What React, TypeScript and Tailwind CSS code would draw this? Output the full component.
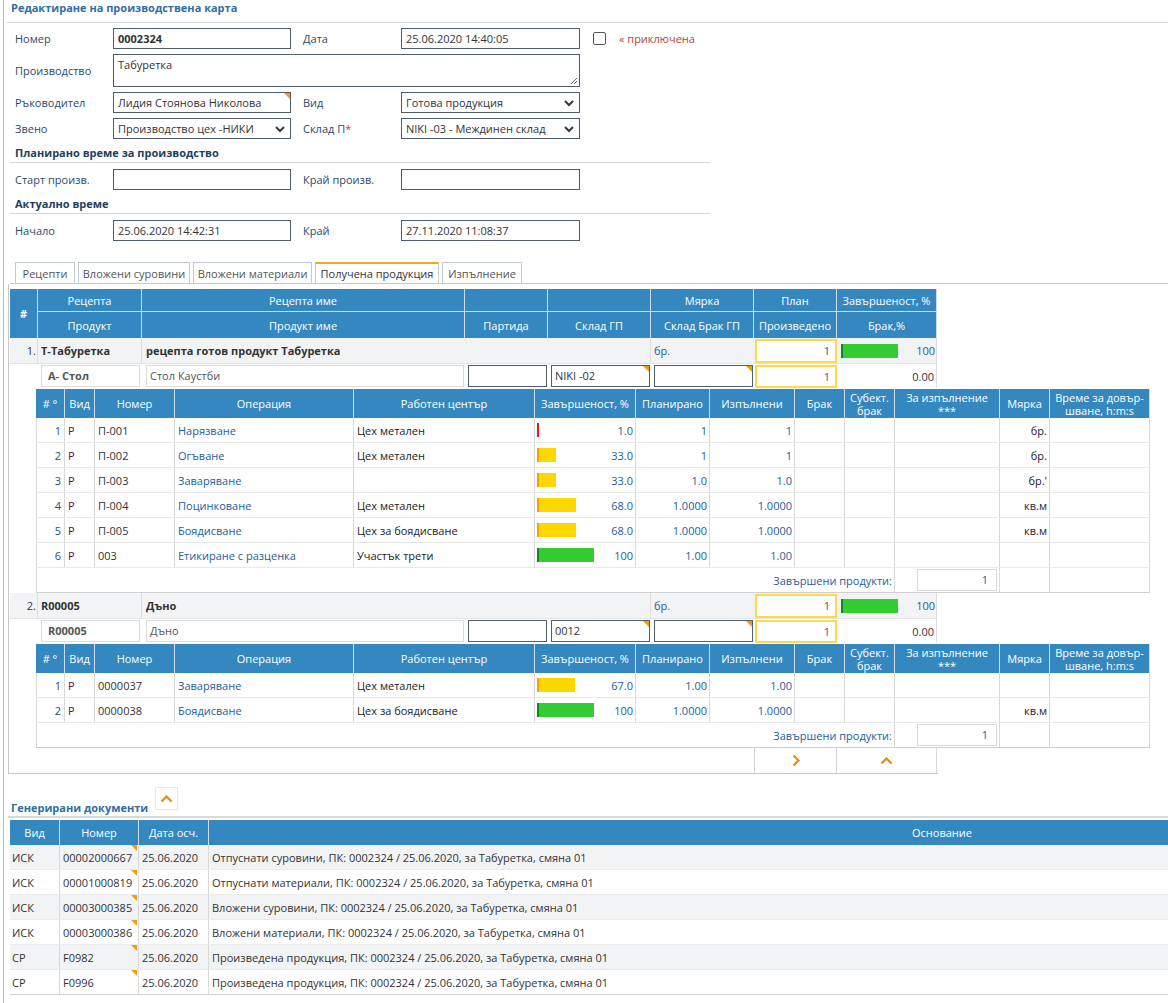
import React from "react";

const LINK = "text-[#23609a]";

function Corner() {
  return (
    <span className="absolute right-0 top-0 h-0 w-0 border-l-[6px] border-t-[6px] border-l-transparent border-t-[#f39c12]" />
  );
}

function SelectArrow() {
  return (
    <svg className="absolute right-[5px] top-[7px]" width="10" height="7" viewBox="0 0 10 7">
      <path d="M1 1l4 4 4-4" fill="none" stroke="#3a3a3a" strokeWidth="2" />
    </svg>
  );
}

function Input({
  w,
  value,
  bold,
  corner,
  select,
}: {
  w: string;
  value?: string;
  bold?: boolean;
  corner?: boolean;
  select?: boolean;
}) {
  return (
    <div
      className={`relative h-[21px] ${w} shrink-0 border border-[#4f5d6b] bg-white pl-[4px] leading-[19px] ${bold ? "font-bold" : ""}`}
    >
      {value}
      {corner && <Corner />}
      {select && <SelectArrow />}
    </div>
  );
}

function Label({ children, red }: { children: React.ReactNode; red?: boolean }) {
  return (
    <div className="w-[98px] shrink-0 text-[#2a4a6b]">
      {children}
      {red && <span className="text-[#e0302a]">*</span>}
    </div>
  );
}

function FormRow({ children, top = "mt-[5px]" }: { children: React.ReactNode; top?: string }) {
  return <div className={`${top} flex h-[21px] items-center pl-[5px]`}>{children}</div>;
}

function Section({ title }: { title: string }) {
  return (
    <div className="mt-[4px] h-[20px] w-[700px] border-b border-[#d5d5d5] pl-[5px] font-bold leading-[19px] text-[#1d3f5e]">
      {title}
    </div>
  );
}

function Bar({ pct }: { pct: number }) {
  if (pct < 5) return <span className="inline-block h-[14px] w-[2px] bg-[#e41b1b]" />;
  const w = Math.round((pct / 100) * 57);
  const done = pct >= 100;
  return (
    <span
      className={`inline-block h-[14px] border-l-2 ${done ? "border-[#12861a] bg-[#33cc33]" : "border-[#f5a000] bg-[#ffd700]"}`}
      style={{ width: w }}
    />
  );
}

function YellowInput({ h }: { h: string }) {
  return (
    <div className={`ml-[1px] ${h} w-[82px] border-2 border-[#ffd84d] bg-white pr-[5px] text-right leading-[19px] text-[#555]`}>
      1
    </div>
  );
}

function Box({
  w,
  children,
  light,
  bold,
  corner,
}: {
  w: string;
  children?: React.ReactNode;
  light?: boolean;
  bold?: boolean;
  corner?: boolean;
}) {
  return (
    <div
      className={`relative h-[22px] ${w} border bg-white leading-[20px] ${light ? "border-[#dcdcdc] text-[#555]" : "border-[#4f5d6b]"} ${bold ? "pl-[6px] font-bold text-[#444]" : "pl-[3px]"}`}
    >
      {children}
      {corner && <Corner />}
    </div>
  );
}

function RecipeRow({ n, code, name }: { n: string; code: string; name: string }) {
  return (
    <div className="flex h-[26px] w-[927px] border-b border-[#e4e4e4] bg-[#f2f3f5]">
      <div className="flex w-[28px] shrink-0 items-center justify-end border-r border-[#dedede] pr-[1px]">{n}</div>
      <div className="flex w-[104px] shrink-0 items-center border-r border-[#dedede] pl-[3px] font-bold">{code}</div>
      <div className="flex w-[323px] shrink-0 items-center pl-[4px] font-bold">{name}</div>
      <div className="w-[83px] shrink-0" />
      <div className="w-[103px] shrink-0 border-r border-[#dedede]" />
      <div className={`flex w-[103px] shrink-0 items-center pl-[3px] ${LINK}`}>бр.</div>
      <div className="flex w-[83px] shrink-0 items-center">
        <YellowInput h="h-[24px]" />
      </div>
      <div className="flex w-[100px] shrink-0 items-center justify-between border-r border-[#dedede] pl-[4px] pr-[1px]">
        <Bar pct={100} />
        <span className={LINK}>100</span>
      </div>
    </div>
  );
}

function ProductRow({ code, name, store }: { code: string; name: string; store: string }) {
  return (
    <div className="flex h-[24px] w-[927px] items-center">
      <div className="w-[28px] shrink-0" />
      <div className="w-[104px] shrink-0 pl-[3px]">
        <Box w="w-[99px]" light bold>
          {code}
        </Box>
      </div>
      <div className="w-[323px] shrink-0 pl-[4px]">
        <Box w="w-[318px]" light>
          {name}
        </Box>
      </div>
      <div className="w-[83px] shrink-0 pl-[3px]">
        <Box w="w-[79px]" />
      </div>
      <div className="w-[103px] shrink-0 pl-[3px]">
        <Box w="w-[99px]" corner>
          {store}
        </Box>
      </div>
      <div className="w-[103px] shrink-0 pl-[3px]">
        <Box w="w-[99px]" corner />
      </div>
      <div className="w-[83px] shrink-0">
        <YellowInput h="h-[23px]" />
      </div>
      <div className="flex h-full w-[100px] shrink-0 items-center justify-end border-r border-[#dedede] pr-[2px]">0.00</div>
    </div>
  );
}

type Op = {
  n: number;
  code: string;
  op: string;
  wc: string;
  pct: number;
  pv: string;
  plan: string;
  done: string;
  unit: string;
};

const SUB_HEAD: [string, string][] = [
  ["w-[29px]", "# °"],
  ["w-[30px]", "Вид"],
  ["w-[80px]", "Номер"],
  ["w-[179px]", "Операция"],
  ["w-[181px]", "Работен център"],
  ["w-[101px]", "Завършеност, %"],
  ["w-[74px]", "Планирано"],
  ["w-[85px]", "Изпълнени"],
  ["w-[50px]", "Брак"],
  ["w-[50px]", "Субект.\nбрак"],
  ["w-[105px]", "За изпълнение\n***"],
  ["w-[50px]", "Мярка"],
  ["w-[100px]", "Време за довър-\nшване, h:m:s"],
];

const CELL = "flex h-full shrink-0 items-center border-r border-[#d9d9d9]";

function SubTable({ ops }: { ops: Op[] }) {
  return (
    <div className="ml-[26px] mt-[1px] w-[1114px]">
      <div className="flex h-[29px] bg-[#3588bf] leading-[13px] text-white">
        {SUB_HEAD.map(([w, t], i) => (
          <div
            key={i}
            className={`${w} flex shrink-0 items-center justify-center whitespace-pre-line border-r border-[#cfdce7] text-center`}
          >
            {t}
          </div>
        ))}
      </div>
      {ops.map((o) => (
        <div key={o.n} className="flex h-[25px] border-b border-[#e9e9e9]">
          <div className={`${CELL} w-[29px] justify-end border-l pr-[3px] text-[#1f4e79]`}>{o.n}</div>
          <div className={`${CELL} w-[30px] pl-[3px] text-[#5c1236]`}>Р</div>
          <div className={`${CELL} w-[80px] pl-[3px]`}>{o.code}</div>
          <div className={`${CELL} w-[179px] pl-[3px] ${LINK}`}>{o.op}</div>
          <div className={`${CELL} w-[181px] pl-[3px] text-[#222]`}>{o.wc}</div>
          <div className={`${CELL} w-[101px] justify-between pl-[2px] pr-[2px]`}>
            <Bar pct={o.pct} />
            <span className={LINK}>{o.pv}</span>
          </div>
          <div className={`${CELL} w-[74px] justify-end pr-[2px] ${LINK}`}>{o.plan}</div>
          <div className={`${CELL} w-[85px] justify-end pr-[2px] ${LINK}`}>{o.done}</div>
          <div className={`${CELL} w-[50px]`} />
          <div className={`${CELL} w-[50px]`} />
          <div className={`${CELL} w-[105px]`} />
          <div className={`${CELL} w-[50px] justify-end pr-[2px] text-[#2a2035]`}>{o.unit}</div>
          <div className={`${CELL} w-[100px]`} />
        </div>
      ))}
      <div className="flex h-[25px] border-b border-[#d0d0d0]">
        <div className={`${CELL} w-[859px] justify-end border-l pr-[2px] ${LINK}`}>Завършени продукти:</div>
        <div className={`${CELL} w-[105px] pl-[22px]`}>
          <div className={`h-[22px] w-[80px] border border-[#d9d9d9] pr-[8px] text-right leading-[20px] ${LINK}`}>1</div>
        </div>
        <div className={`${CELL} w-[50px]`} />
        <div className={`${CELL} w-[100px]`} />
      </div>
    </div>
  );
}

const OPS1: Op[] = [
  { n: 1, code: "П-001", op: "Нарязване", wc: "Цех метален", pct: 1, pv: "1.0", plan: "1", done: "1", unit: "бр." },
  { n: 2, code: "П-002", op: "Огъване", wc: "Цех метален", pct: 33, pv: "33.0", plan: "1", done: "1", unit: "бр." },
  { n: 3, code: "П-003", op: "Заваряване", wc: "", pct: 33, pv: "33.0", plan: "1.0", done: "1.0", unit: "бр.'" },
  { n: 4, code: "П-004", op: "Поцинковане", wc: "Цех метален", pct: 68, pv: "68.0", plan: "1.0000", done: "1.0000", unit: "кв.м" },
  { n: 5, code: "П-005", op: "Боядисване", wc: "Цех за боядисване", pct: 68, pv: "68.0", plan: "1.0000", done: "1.0000", unit: "кв.м" },
  { n: 6, code: "003", op: "Етикиране с разценка", wc: "Участък трети", pct: 100, pv: "100", plan: "1.00", done: "1.00", unit: "" },
];

const OPS2: Op[] = [
  { n: 1, code: "0000037", op: "Заваряване", wc: "Цех метален", pct: 67, pv: "67.0", plan: "1.00", done: "1.00", unit: "" },
  { n: 2, code: "0000038", op: "Боядисване", wc: "Цех за боядисване", pct: 100, pv: "100", plan: "1.0000", done: "1.0000", unit: "кв.м" },
];

const DOCS = [
  ["ИСК", "00002000667", "Отпуснати суровини"],
  ["ИСК", "00001000819", "Отпуснати материали"],
  ["ИСК", "00003000385", "Вложени суровини"],
  ["ИСК", "00003000386", "Вложени материали"],
  ["СР", "F0982", "Произведена продукция"],
  ["СР", "F0996", "Произведена продукция"],
];

const TABS: [string, string][] = [
  ["w-[60px]", "Рецепти"],
  ["w-[112px]", "Вложени суровини"],
  ["w-[119px]", "Вложени материали"],
  ["w-[124px]", "Получена продукция"],
  ["w-[80px]", "Изпълнение"],
];

const MAIN_TOP: [string, string][] = [
  ["w-[104px]", "Рецепта"],
  ["w-[323px]", "Рецепта име"],
  ["w-[83px]", ""],
  ["w-[103px]", ""],
  ["w-[103px]", "Мярка"],
  ["w-[83px]", "План"],
  ["w-[100px]", "Завършеност, %"],
];

const MAIN_BOTTOM: [string, string][] = [
  ["w-[104px]", "Продукт"],
  ["w-[323px]", "Продукт име"],
  ["w-[83px]", "Партида"],
  ["w-[103px]", "Склад ГП"],
  ["w-[103px]", "Склад Брак ГП"],
  ["w-[83px]", "Произведено"],
  ["w-[100px]", "Брак,%"],
];

function Chevron({ dir }: { dir: "right" | "up" }) {
  return dir === "right" ? (
    <svg width="8" height="13" viewBox="0 0 8 13">
      <path d="M1.5 1.5l5 5-5 5" fill="none" stroke="#f08a00" strokeWidth="2.2" />
    </svg>
  ) : (
    <svg width="13" height="8" viewBox="0 0 13 8">
      <path d="M1.5 6.5l5-5 5 5" fill="none" stroke="#f08a00" strokeWidth="2.2" />
    </svg>
  );
}

const HEAD_CELL = "flex shrink-0 items-center justify-center border-r border-[#cfdce7]";

export default function App() {
  return (
    <div className="min-h-[1003px] w-[1168px] overflow-hidden bg-white font-['Open_Sans',sans-serif] text-[11px] leading-[15px] text-[#333]">
      <div className="ml-[3px] min-h-[1003px] border-l border-[#aebbc7]">
        {/* Title */}
        <div className="ml-[3px] h-[23px] border-b border-[#d5d5d5] pl-[4px] font-bold text-[#2f6ea5]">
          Редактиране на производствена карта
        </div>

        {/* Form */}
        <div className="ml-[6px] flex flex-col">
          <FormRow>
            <Label>Номер</Label>
            <Input w="w-[178px]" value="0002324" bold />
            <div className="w-[12px]" />
            <Label>Дата</Label>
            <Input w="w-[179px]" value="25.06.2020 14:40:05" />
            <span className="ml-[13px] inline-block h-[13px] w-[13px] rounded-[2px] border border-[#555] bg-white" />
            <span className="ml-[13px] text-[#b5453a]">« приключена</span>
          </FormRow>
          <div className="mt-[5px] flex h-[33px] items-center pl-[5px]">
            <Label>Производство</Label>
            <div className="relative h-[33px] w-[467px] border border-[#4f5d6b] pl-[4px] pt-[2px]">
              Табуретка
              <svg className="absolute bottom-[1px] right-[1px]" width="8" height="8" viewBox="0 0 8 8">
                <path d="M7 1L1 7M7 4L4 7" stroke="#666" strokeWidth="1" />
              </svg>
            </div>
          </div>
          <FormRow>
            <Label>Ръководител</Label>
            <Input w="w-[178px]" value="Лидия Стоянова Николова" corner />
            <div className="w-[12px]" />
            <Label>Вид</Label>
            <Input w="w-[179px]" value="Готова продукция" select />
          </FormRow>
          <FormRow>
            <Label>Звено</Label>
            <Input w="w-[178px]" value="Производство цех -НИКИ" select />
            <div className="w-[12px]" />
            <Label red>Склад П</Label>
            <Input w="w-[179px]" value="NIKI -03 - Междинен склад" select />
          </FormRow>

          <Section title="Планирано време за производство" />
          <FormRow top="mt-[6px]">
            <Label>Старт произв.</Label>
            <Input w="w-[178px]" />
            <div className="w-[12px]" />
            <Label>Край произв.</Label>
            <Input w="w-[179px]" />
          </FormRow>

          <Section title="Актуално време" />
          <FormRow top="mt-[6px]">
            <Label>Начало</Label>
            <Input w="w-[178px]" value="25.06.2020 14:42:31" />
            <div className="w-[12px]" />
            <Label>Край</Label>
            <Input w="w-[179px]" value="27.11.2020 11:08:37" />
          </FormRow>

          {/* Tabs */}
          <div className="mt-[21px] flex items-end gap-[3px] border-b border-[#c3ccd4] pl-[5px]">
            {TABS.map(([w, t], i) => (
              <div
                key={t}
                className={`${w} flex h-[21px] items-center justify-center whitespace-nowrap border border-b-0 border-[#c3ccd4] ${i === 3 ? "border-t-2 border-t-[#f5a623] text-[#333]" : "text-[#555]"}`}
              >
                {t}
              </div>
            ))}
          </div>
        </div>

        {/* Recipes / products */}
        <div className="ml-[4px] w-[930px] border-b border-l border-[#c8c8c8] pl-[1px] pt-[5px]">
          <div className="flex w-[927px] bg-[#3588bf] text-white">
            <div className={`${HEAD_CELL} w-[28px] font-bold`}>#</div>
            <div className="flex flex-col">
              <div className="flex h-[23px] border-b border-[#cfdce7]">
                {MAIN_TOP.map(([w, t], i) => (
                  <div key={i} className={`${HEAD_CELL} ${w}`}>
                    {t}
                  </div>
                ))}
              </div>
              <div className="flex h-[26px]">
                {MAIN_BOTTOM.map(([w, t], i) => (
                  <div key={i} className={`${HEAD_CELL} ${w}`}>
                    {t}
                  </div>
                ))}
              </div>
            </div>
          </div>

          <RecipeRow n="1." code="Т-Табуретка" name="рецепта готов продукт Табуретка" />
          <ProductRow code="А- Стол" name="Стол Каустби" store="NIKI -02" />
          <SubTable ops={OPS1} />

          <RecipeRow n="2." code="R00005" name="Дъно" />
          <ProductRow code="R00005" name="Дъно" store="0012" />
          <SubTable ops={OPS2} />

          <div className="flex h-[25px] w-[927px]">
            <div className="w-[744px] shrink-0" />
            <div className="flex w-[83px] shrink-0 items-center justify-center border-x border-[#d6d6d6]">
              <Chevron dir="right" />
            </div>
            <div className="flex w-[100px] shrink-0 items-center justify-center border-r border-[#d6d6d6]">
              <Chevron dir="up" />
            </div>
          </div>
        </div>

        {/* Generated documents */}
        <div className="ml-[4px] mt-[13px] flex h-[31px] items-start border-b-2 border-[#d8d8d8] pl-[3px]">
          <div className="mt-[13px] font-bold text-[#2f6ea5]">Генерирани документи</div>
          <div className="ml-[7px] flex h-[23px] w-[23px] items-center justify-center border border-[#e3e9ef]">
            <Chevron dir="up" />
          </div>
        </div>

        <div className="ml-[6px] mt-[2px] w-[1665px]">
          <div className="flex h-[25px] bg-[#3588bf] text-white">
            <div className={`${HEAD_CELL} w-[50px]`}>Вид</div>
            <div className={`${HEAD_CELL} w-[79px]`}>Номер</div>
            <div className={`${HEAD_CELL} w-[70px]`}>Дата осч.</div>
            <div className="flex flex-1 items-center justify-center">Основание</div>
          </div>
          {DOCS.map(([kind, num, what], i) => (
            <div
              key={num}
              className={`flex h-[25px] border-b ${i === DOCS.length - 1 ? "border-[#d0d0d0]" : "border-[#ebebeb]"} ${i % 2 === 0 ? "bg-[#f2f3f5]" : "bg-white"}`}
            >
              <div className={`${CELL} w-[50px] pl-[2px]`}>{kind}</div>
              <div className={`${CELL} relative w-[79px] pl-[3px]`}>
                {num}
                <span className="absolute right-[1px] top-0 h-0 w-0 border-l-[6px] border-t-[6px] border-l-transparent border-t-[#f39c12]" />
              </div>
              <div className={`${CELL} w-[70px] pl-[3px]`}>25.06.2020</div>
              <div className="flex flex-1 items-center pl-[3px]">
                {what}, ПК: 0002324 / 25.06.2020, за Табуретка, смяна 01
              </div>
            </div>
          ))}
        </div>
      </div>
    </div>
  );
}
